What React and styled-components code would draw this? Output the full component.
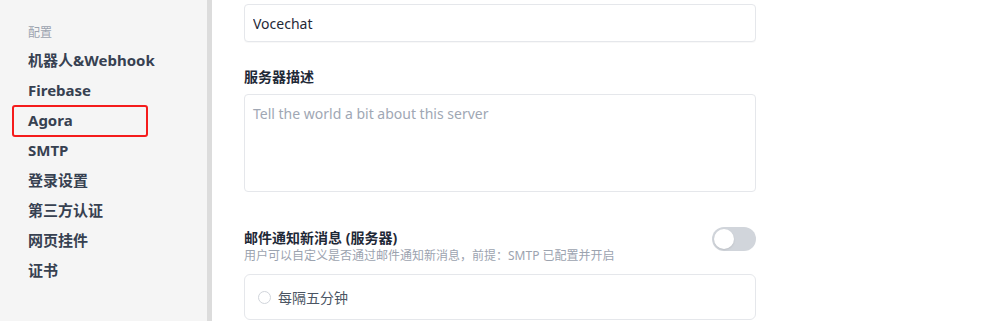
import styled, { createGlobalStyle } from "styled-components";

const GlobalStyle = createGlobalStyle`
  html, body {
    margin: 0;
    padding: 0;
    background: #fff;
    font-family: "Noto Sans", "Noto Sans CJK SC", sans-serif;
  }
  * { box-sizing: border-box; }
`;

const Page = styled.div`
  display: flex;
  width: 1004px;
  height: 321px;
  overflow: hidden;
`;

const Sidebar = styled.nav`
  width: 207px;
  flex-shrink: 0;
  background: #f5f5f5;
  padding: 24px 0 0 28px;
  display: flex;
  flex-direction: column;
`;

const Scroll = styled.div`
  width: 5px;
  flex-shrink: 0;
  background: #dcdcdc;
`;

const Group = styled.div`
  font-size: 12px;
  line-height: 18px;
  color: #9ca3af;
  margin-bottom: 3px;
`;

const NavItem = styled.a`
  position: relative;
  display: block;
  font-size: 15px;
  line-height: 30px;
  font-weight: 700;
  color: #374151;
  text-decoration: none;
`;

const Marker = styled.span`
  position: absolute;
  left: -16px;
  top: 0;
  width: 136px;
  height: 32px;
  border: 2px solid #f51c1c;
  border-radius: 3px;
`;

const Main = styled.main`
  flex: 1;
  padding: 4px 0 0 32px;
`;

const Form = styled.div`
  width: 512px;
  display: flex;
  flex-direction: column;
`;

const TextInput = styled.input`
  height: 38px;
  width: 100%;
  border: 1px solid #e5e7eb;
  border-radius: 4px;
  padding: 0 8px;
  font: inherit;
  font-size: 14px;
  color: #1f2937;
  outline: none;
  box-shadow: 0 1px 1px rgba(0, 0, 0, 0.03);
`;

const Label = styled.label`
  font-size: 14px;
  font-weight: 700;
  color: #1f2937;
  line-height: 20px;
  margin: 25px 0 7px;
`;

const TextArea = styled.textarea`
  width: 100%;
  height: 98px;
  resize: none;
  border: 1px solid #e5e7eb;
  border-radius: 4px;
  padding: 8px 8px;
  font: inherit;
  font-size: 14px;
  line-height: 22px;
  outline: none;
  &::placeholder { color: #a0a7b4; }
`;

const SettingRow = styled.div`
  display: flex;
  justify-content: space-between;
  align-items: flex-start;
  margin-top: 36px;
`;

const SettingText = styled.div`
  display: flex;
  flex-direction: column;
`;

const SettingTitle = styled.div`
  font-size: 14px;
  font-weight: 700;
  color: #1f2937;
  line-height: 20px;
`;

const SettingDesc = styled.div`
  font-size: 12px;
  color: #9ca3af;
  line-height: 16px;
`;

const Toggle = styled.button`
  width: 44px;
  height: 24px;
  border: none;
  border-radius: 12px;
  background: ${(p) => (p.$on ? "#22c55e" : "#d1d5db")};
  padding: 2px;
  display: flex;
  justify-content: ${(p) => (p.$on ? "flex-end" : "flex-start")};
  margin-top: -1px;
  &::after {
    content: "";
    width: 20px;
    height: 20px;
    border-radius: 50%;
    background: #fff;
    box-shadow: 0 1px 2px rgba(0, 0, 0, 0.1);
  }
`;

const OptionBox = styled.div`
  margin-top: 10px;
  height: 46px;
  border: 1px solid #e5e7eb;
  border-radius: 6px;
  display: flex;
  align-items: center;
  padding: 0 13px;
  gap: 7px;
`;

const Radio = styled.span`
  width: 13px;
  height: 13px;
  border-radius: 50%;
  border: 1px solid #d1d5db;
  background: #fff;
`;

const OptionText = styled.span`
  font-size: 14px;
  color: #4b5563;
`;

const items = ["机器人&Webhook", "Firebase", "Agora", "SMTP", "登录设置", "第三方认证", "网页挂件", "证书"];

export default function App() {
  return (
    <>
      <GlobalStyle />
      <Page>
        <Sidebar>
          <Group>配置</Group>
          {items.map((it) => (
            <NavItem key={it} href="#">
              {it}
              {it === "Agora" && <Marker />}
            </NavItem>
          ))}
        </Sidebar>
        <Scroll />
        <Main>
          <Form>
            <TextInput defaultValue="Vocechat" />
            <Label>服务器描述</Label>
            <TextArea placeholder="Tell the world a bit about this server" />
            <SettingRow>
              <SettingText>
                <SettingTitle>邮件通知新消息 (服务器)</SettingTitle>
                <SettingDesc>用户可以自定义是否通过邮件通知新消息，前提：SMTP 已配置并开启</SettingDesc>
              </SettingText>
              <Toggle />
            </SettingRow>
            <OptionBox>
              <Radio />
              <OptionText>每隔五分钟</OptionText>
            </OptionBox>
          </Form>
        </Main>
      </Page>
    </>
  );
}
